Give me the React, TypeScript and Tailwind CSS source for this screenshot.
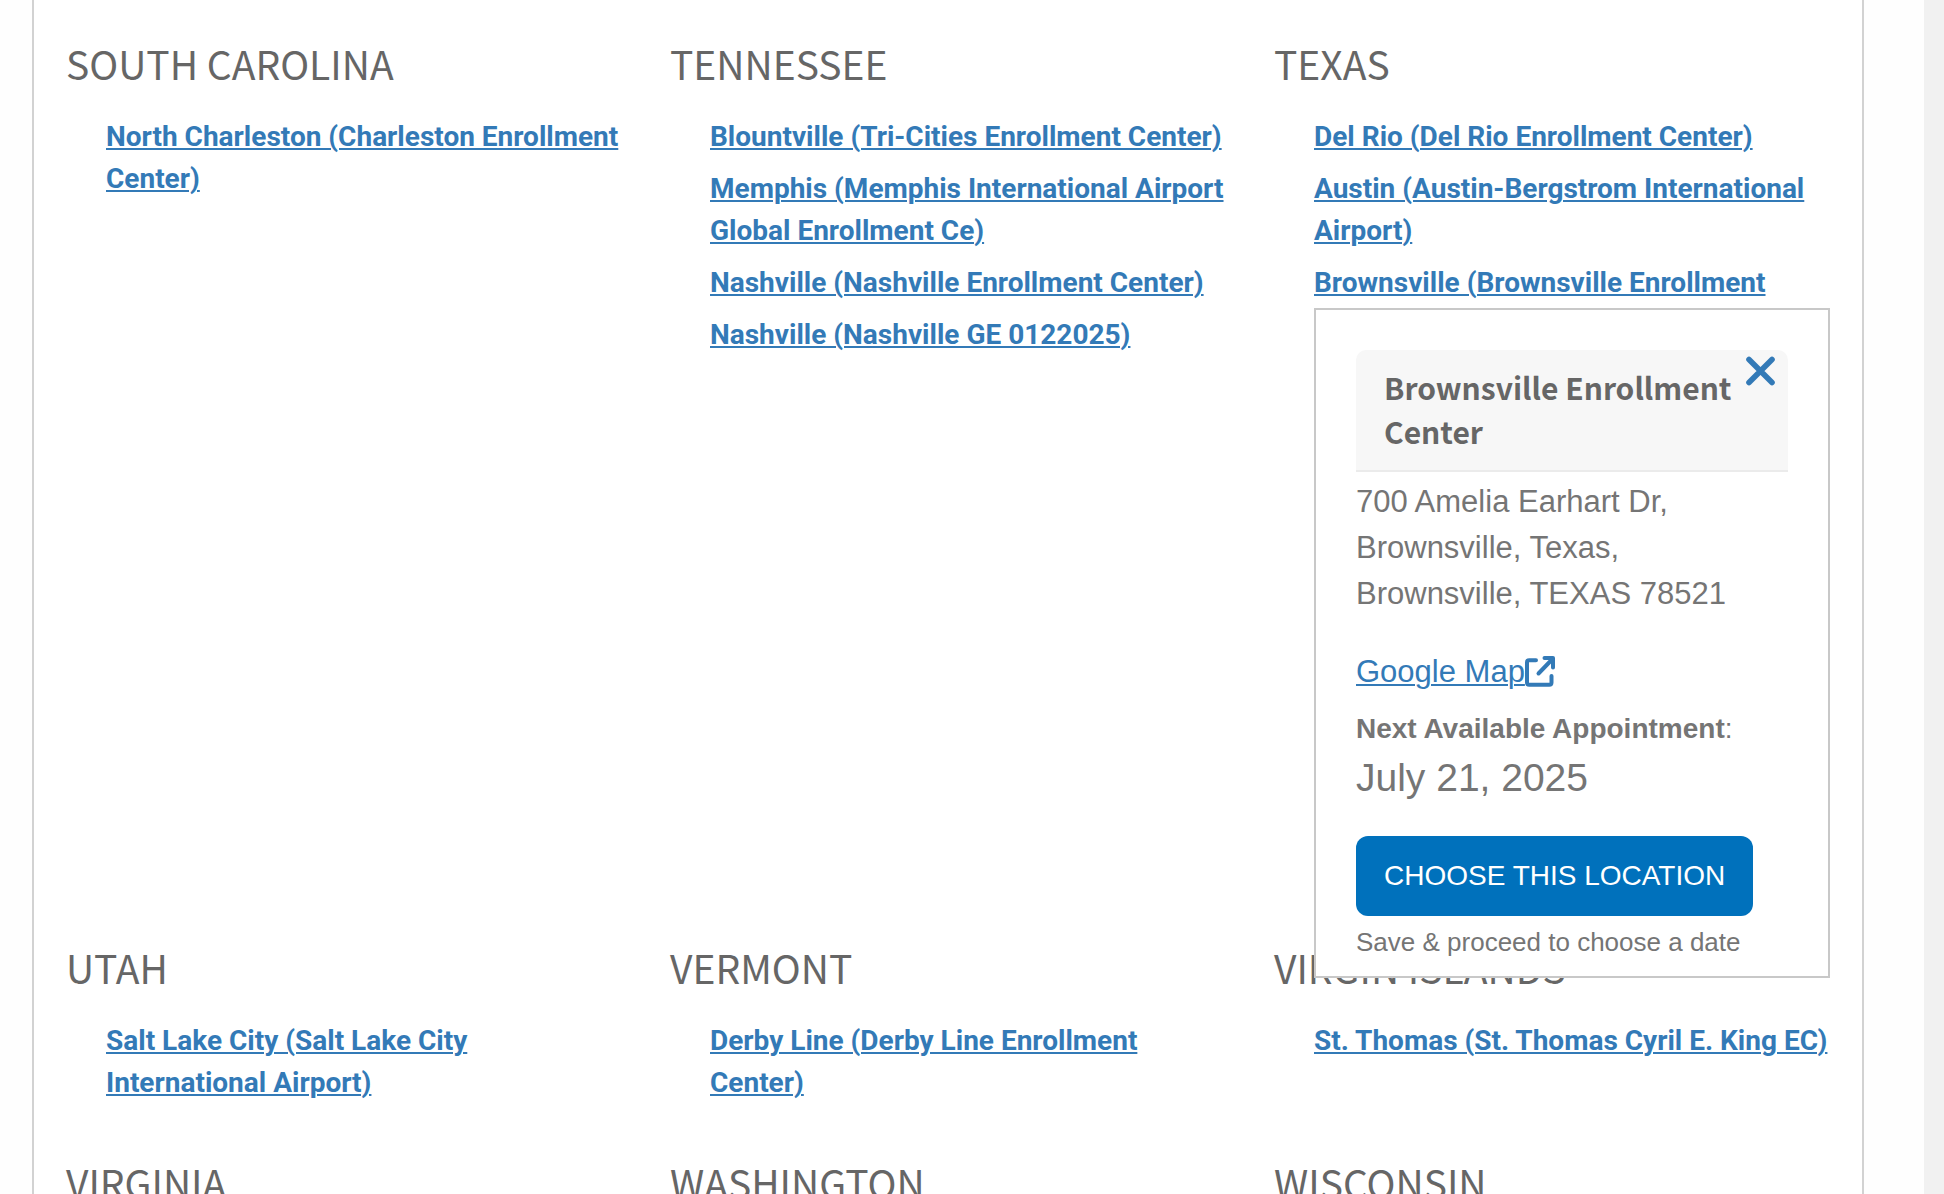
import React, { useState } from "react";

type Region = { name: string; centers: string[] };

const regions: Region[] = [
  {
    name: "SOUTH CAROLINA",
    centers: ["North Charleston (Charleston Enrollment Center)"],
  },
  {
    name: "TENNESSEE",
    centers: [
      "Blountville (Tri-Cities Enrollment Center)",
      "Memphis (Memphis International Airport Global Enrollment Ce)",
      "Nashville (Nashville Enrollment Center)",
      "Nashville (Nashville GE 0122025)",
    ],
  },
  {
    name: "TEXAS",
    centers: [
      "Del Rio (Del Rio Enrollment Center)",
      "Austin (Austin-Bergstrom International Airport)",
      "Brownsville (Brownsville Enrollment Center)",
    ],
  },
  {
    name: "UTAH",
    centers: ["Salt Lake City (Salt Lake City International Airport)"],
  },
  {
    name: "VERMONT",
    centers: ["Derby Line (Derby Line Enrollment Center)"],
  },
  {
    name: "VIRGIN ISLANDS",
    centers: ["St. Thomas (St. Thomas Cyril E. King EC)"],
  },
  { name: "VIRGINIA", centers: [] },
  { name: "WASHINGTON", centers: [] },
  { name: "WISCONSIN", centers: [] },
];

function CloseIcon() {
  return (
    <svg viewBox="0 0 30 30" className="size-[30px]" aria-hidden="true">
      <path d="M3 3.500 26 26.500M26 3.500 3 26.500" stroke="currentColor" strokeWidth="5.600" strokeLinecap="round" fill="none" />
    </svg>
  );
}

function ExternalIcon() {
  return (
    <svg viewBox="0 0 32 32" className="size-8" aria-hidden="true">
      <g stroke="currentColor" strokeWidth="4" strokeLinecap="round" strokeLinejoin="round" fill="none">
        <path d="M11 4.200H4.200Q2 4.200 2 6.400V26.600Q2 28.800 4.200 28.800H24.300Q26.500 28.800 26.500 26.600V20" />
        <path d="M19.500 2H28V11.500" />
        <path d="M13.500 17.500 27.500 3" />
      </g>
    </svg>
  );
}

function CenterDetails({ onClose }: { onClose: () => void }) {
  return (
    <div
      role="dialog"
      aria-labelledby="center-name"
      className="absolute inset-x-0 top-[46px] z-10 border-2 border-[#c8c8c8] bg-white px-10 pt-10 pb-4 font-['Liberation_Sans',Arial,sans-serif] font-normal text-[#757575]"
    >
      <div className="relative rounded-t-[10px] border-b-2 border-[#ebebeb] bg-[#f7f7f7] px-7 pt-[15px] pb-[17px]">
        <h3
          id="center-name"
          className="font-['Noto_Sans_CJK_SC','Noto_Sans_CJK_JP',sans-serif] text-[30px] leading-[44px] font-bold text-[#666]"
        >
          Brownsville Enrollment Center
        </h3>
        <button
          type="button"
          aria-label="Close"
          onClick={onClose}
          className="absolute top-1.5 right-3 cursor-pointer text-[#337ab7]"
        >
          <CloseIcon />
        </button>
      </div>
      <address className="mt-[7px] text-[31px] leading-[46px] not-italic">
        700 Amelia Earhart Dr,
        <br />
        Brownsville, Texas,
        <br />
        Brownsville, TEXAS 78521
      </address>
      <a href="#map" className="mt-8 flex items-center text-[31px] leading-[46px] text-[#337ab7]">
        <span className="underline decoration-2 underline-offset-2">Google Map</span>
        <ExternalIcon />
      </a>
      <p className="mt-3 text-[28px] leading-[44px]">
        <strong>Next Available Appointment</strong>:
      </p>
      <p className="text-[39px] leading-[53px]">July 21, 2025</p>
      <button
        type="button"
        className="mt-8 block h-20 cursor-pointer rounded-xl bg-[#0071bc] px-7 text-[28px] leading-10 text-white"
      >
        CHOOSE THIS LOCATION
      </button>
      <p className="mt-2 text-[26px] leading-9">Save &amp; proceed to choose a date</p>
    </div>
  );
}

function RegionBlock({
  region,
  open,
  onToggle,
}: {
  region: Region;
  open: string | null;
  onToggle: (center: string | null) => void;
}) {
  // A region whose details card is open keeps room for that card.
  const expanded = open !== null && region.centers.includes(open);
  return (
    <section className={expanded ? "min-h-[904px]" : "pb-[38px]"}>
      <h2 className="font-['Noto_Sans_CJK_SC','Noto_Sans_CJK_JP',sans-serif] text-[39px] leading-[60px] text-[#666]">
        {region.name}
      </h2>
      <ul className="mt-[23px] mb-px pl-10">
        {region.centers.map((center) => (
          <li
            key={center}
            className="relative mb-[10px] font-[Roboto,sans-serif] text-[28px] leading-[42px] font-bold"
          >
            <a
              href="#center"
              onClick={(e) => {
                e.preventDefault();
                onToggle(center);
              }}
              className="text-[#337ab7] underline decoration-2 underline-offset-2"
            >
              {center}
            </a>
            {open === center && <CenterDetails onClose={() => onToggle(null)} />}
          </li>
        ))}
      </ul>
    </section>
  );
}

export default function App() {
  const [open, setOpen] = useState<string | null>("Brownsville (Brownsville Enrollment Center)");
  return (
    <div className="flex h-screen overflow-hidden bg-white">
      <main className="min-w-0 flex-1 bg-[#fefefe] pr-[60px] pl-8">
        <div className="grid min-h-full grid-cols-3 gap-x-12 border-x-2 border-[#d2d2d2] bg-white px-8 pt-[33px]">
          {regions.map((region) => (
            <RegionBlock key={region.name} region={region} open={open} onToggle={setOpen} />
          ))}
        </div>
      </main>
      <div className="w-5 bg-[#f1f1f1]" aria-hidden="true" />
    </div>
  );
}
